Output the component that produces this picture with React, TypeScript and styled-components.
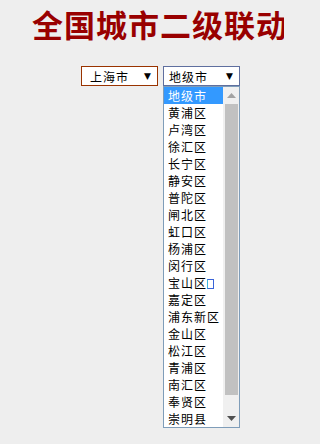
import React from "react";
import styled, { createGlobalStyle } from "styled-components";

const Global = createGlobalStyle`
  html, body { margin: 0; padding: 0; background: #eeeeee; }
  body { font-family: "Noto Sans CJK SC", "Noto Sans", sans-serif; overflow: hidden; }
`;

const Page = styled.div`
  width: 284px;
  height: 444px;
  overflow: hidden;
`;

const Title = styled.h1`
  margin: 0;
  padding: 2px 0 0 32px;
  height: 44px;
  box-sizing: border-box;
  font-size: 31px;
  line-height: 44px;
  font-weight: 700;
  color: #990000;
  white-space: nowrap;
  letter-spacing: 1px;
`;

const Row = styled.div`
  display: flex;
  gap: 5px;
  padding: 22px 0 0 81px;
`;

const SelectWrap = styled.div`
  position: relative;
`;

const SelectBox = styled.div<{ $focused?: boolean }>`
  width: 77px;
  height: 20px;
  box-sizing: border-box;
  border: 1px solid ${(p) => (p.$focused ? "#5f6f9f" : "#993300")};
  background: #ffffff;
  display: flex;
  align-items: center;
  justify-content: space-between;
  padding: 0 6px 0 ${(p) => (p.$focused ? "5px" : "8px")};
  font-size: 12px;
  letter-spacing: 1px;
  line-height: 17px;
  color: #000;
`;

const Arrow = styled.span`
  font-size: 9px;
  line-height: 1;
  letter-spacing: 0;
  color: #000;
  font-family: "DejaVu Sans", sans-serif;
`;

const List = styled.div`
  position: absolute;
  left: 0;
  top: 20px;
  width: 77px;
  box-sizing: border-box;
  border: 1px solid #7f9db9;
  background: #ffffff;
  display: flex;
`;

const Items = styled.div`
  flex: 1;
  display: flex;
  flex-direction: column;
`;

const Item = styled.div<{ $selected?: boolean }>`
  height: 17px;
  line-height: 17px;
  font-size: 12px;
  letter-spacing: 1px;
  padding-left: 4px;
  white-space: nowrap;
  overflow: hidden;
  color: ${(p) => (p.$selected ? "#ffffff" : "#000000")};
  background: ${(p) => (p.$selected ? "#3399ff" : "transparent")};
`;

const Tofu = styled.span`
  display: inline-block;
  width: 5px;
  height: 8px;
  border: 1px solid #3a64d8;
  border-left-color: #39b6e0;
  vertical-align: -1px;
`;

const Scrollbar = styled.div`
  width: 16px;
  background: #f0f0f0;
  display: flex;
  flex-direction: column;
  align-items: center;
`;

const ScrollBtn = styled.div`
  height: 17px;
  flex: none;
  width: 100%;
  display: flex;
  align-items: center;
  justify-content: center;
`;

const Thumb = styled.div`
  flex: none;
  width: 13px;
  height: 291px;
  background: #c1c1c1;
  margin-left: 1px;
`;

const TrackRest = styled.div`
  flex: 1;
`;

const items = [
  "地级市",
  "黄浦区",
  "卢湾区",
  "徐汇区",
  "长宁区",
  "静安区",
  "普陀区",
  "闸北区",
  "虹口区",
  "杨浦区",
  "闵行区",
  "宝山区",
  "嘉定区",
  "浦东新区",
  "金山区",
  "松江区",
  "青浦区",
  "南汇区",
  "奉贤区",
  "崇明县",
];

export default function App() {
  return (
    <Page>
      <Global />
      <Title>全国城市二级联动</Title>
      <Row>
        <SelectWrap>
          <SelectBox>
            <span>上海市</span>
            <Arrow>▼</Arrow>
          </SelectBox>
        </SelectWrap>
        <SelectWrap>
          <SelectBox $focused>
            <span>地级市</span>
            <Arrow>▼</Arrow>
          </SelectBox>
          <List>
            <Items>
              {items.map((it, i) => (
                <Item key={it} $selected={i === 0}>
                  {it}
                  {it === "宝山区" && <Tofu />}
                </Item>
              ))}
            </Items>
            <Scrollbar>
              <ScrollBtn>
                <svg width="9" height="5" viewBox="0 0 9 5">
                  <path d="M0 5 L4.5 0 L9 5 Z" fill="#a3a3a3" />
                </svg>
              </ScrollBtn>
              <Thumb />
              <TrackRest />
              <ScrollBtn>
                <svg width="9" height="5" viewBox="0 0 9 5">
                  <path d="M0 0 L9 0 L4.5 5 Z" fill="#505050" />
                </svg>
              </ScrollBtn>
            </Scrollbar>
          </List>
        </SelectWrap>
      </Row>
    </Page>
  );
}
